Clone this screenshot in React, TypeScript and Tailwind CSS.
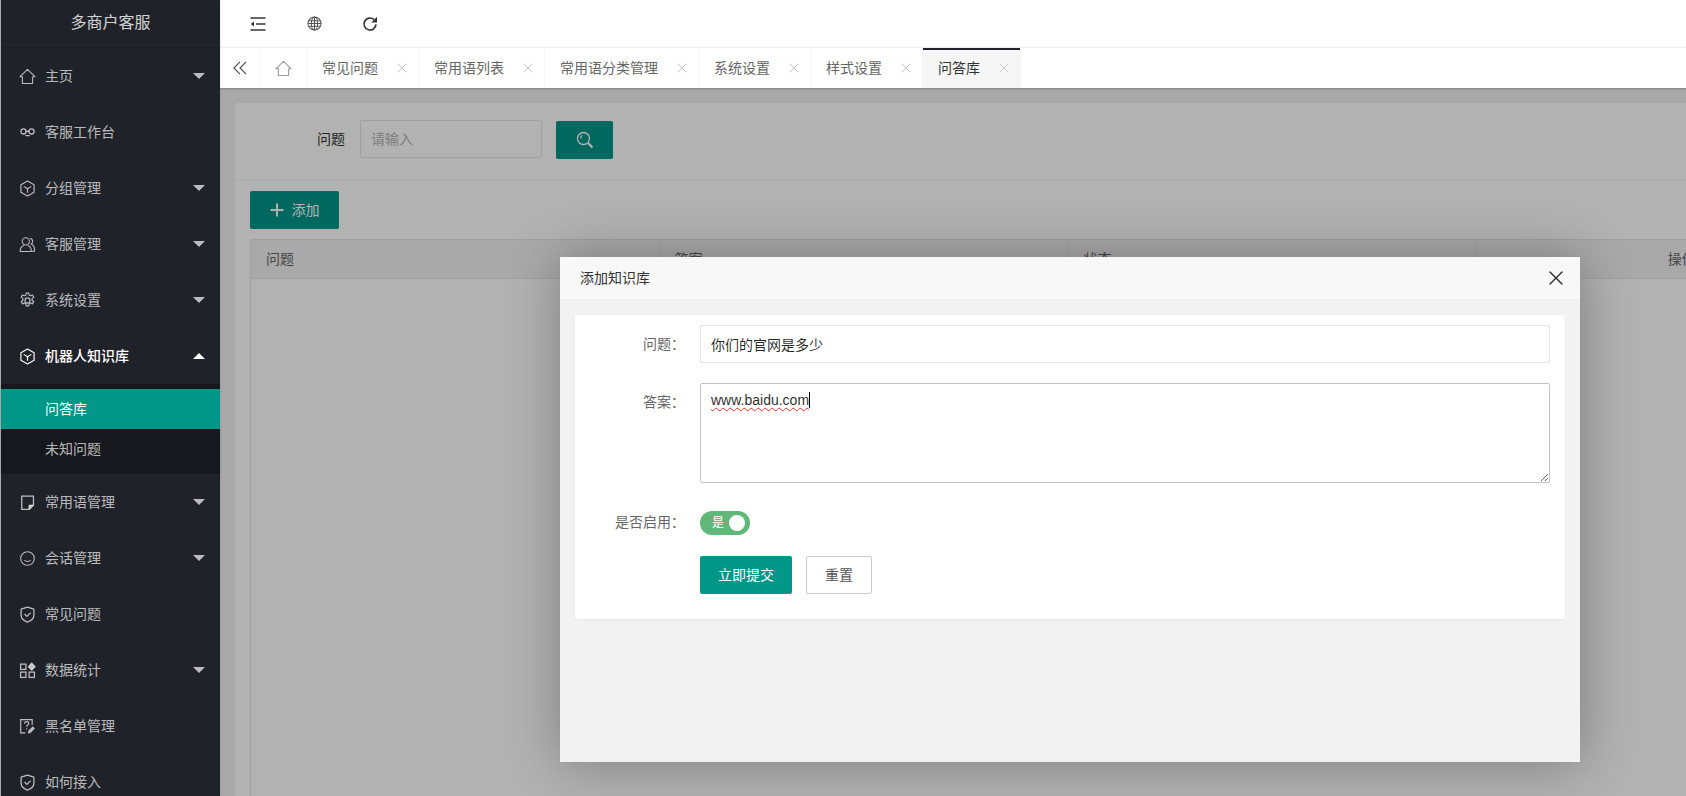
import React from 'react';
import { X } from 'lucide-react';

type IconProps = { className?: string };

// Sidebar + toolbar icons, drawn to match the original icon font
const HomeIcon: React.FC<IconProps> = ({ className }) => (
  <svg viewBox="0 0 16 16" fill="none" stroke="currentColor" strokeWidth="1" className={className}>
    <path d="M8 1.2 15 8.2H12.8V14.6H3.2V8.2H1Z" strokeLinejoin="round" />
  </svg>
);

const LinkIcon: React.FC<IconProps> = ({ className }) => (
  <svg viewBox="0 0 16 16" fill="none" stroke="currentColor" strokeWidth="1.2" className={className}>
    <circle cx="4.2" cy="7" r="2.4" />
    <circle cx="11.8" cy="7" r="2.4" />
    <path d="M6.6 7h2.8M6 11h4" />
  </svg>
);

const BoxIcon: React.FC<IconProps> = ({ className }) => (
  <svg viewBox="0 0 16 16" fill="none" stroke="currentColor" strokeWidth="1.1" className={className}>
    <path d="M8 1 14.2 4.5V11.5L8 15 1.8 11.5V4.5Z" strokeLinejoin="round" />
    <path d="M4.4 6 8 8.2 11.6 6M8 8.2V12" />
  </svg>
);

const UserIcon: React.FC<IconProps> = ({ className }) => (
  <svg viewBox="0 0 16 16" fill="none" stroke="currentColor" strokeWidth="1" className={className}>
    <circle cx="6.4" cy="5" r="3.4" />
    <path d="M1 14.5c0-3 1.6-5 3.6-5.6M8.2 8.9c2 .6 3.4 2.6 3.4 5.6H1" />
    <path d="M10.4 2.2c1.6.4 2.4 1.6 2.4 2.9 0 1-.5 1.9-1.3 2.4 1.9.8 3.1 3 3.1 5.2v1.6h-2.4" />
  </svg>
);

const GearIcon: React.FC<IconProps> = ({ className }) => (
  <svg viewBox="0 0 16 16" fill="none" stroke="currentColor" strokeWidth="1.1" className={className}>
    <circle cx="8" cy="8" r="2.4" />
    <path
      d="M6.8 1h2.4l.4 2 1.2.6 1.9-.8 1.2 2-1.6 1.4v1.6l1.6 1.4-1.2 2-1.9-.8-1.2.6-.4 2H6.8l-.4-2-1.2-.6-1.9.8-1.2-2 1.6-1.4V6.2L2.1 4.8l1.2-2 1.9.8 1.2-.6Z"
      strokeLinejoin="round"
    />
  </svg>
);

const NoteIcon: React.FC<IconProps> = ({ className }) => (
  <svg viewBox="0 0 16 16" fill="none" stroke="currentColor" strokeWidth="1.2" className={className}>
    <path d="M4.6 14.4H2.6V2h11v8.6L9.8 14.4H4.6Z" />
    <path d="M9.6 14V10.6H13.4" fill="currentColor" />
  </svg>
);

const SmileIcon: React.FC<IconProps> = ({ className }) => (
  <svg viewBox="0 0 16 16" fill="none" stroke="currentColor" strokeWidth="1" className={className}>
    <circle cx="8" cy="8" r="6.4" />
    <path d="M5 9.8c1.6 1.2 4.4 1.2 6 0" />
  </svg>
);

const ShieldIcon: React.FC<IconProps> = ({ className }) => (
  <svg viewBox="0 0 16 16" fill="none" stroke="currentColor" strokeWidth="1.2" className={className}>
    <path d="M8 1 14 3V8.6C14 12 11 14 8 15.2 5 14 2 12 2 8.6V3Z" strokeLinejoin="round" />
    <path d="M5.2 7.6 7.4 9.8 11 6.2" />
  </svg>
);

const AppsIcon: React.FC<IconProps> = ({ className }) => (
  <svg viewBox="0 0 16 16" fill="none" stroke="currentColor" strokeWidth="1.2" className={className}>
    <rect x="1.5" y="2" width="5" height="5" />
    <rect x="1.5" y="9.5" width="5" height="5" />
    <rect x="9.5" y="9.5" width="5" height="5" />
    <path d="M12 1.2 15 4.4 12 7.6 9 4.4Z" fill="currentColor" />
  </svg>
);

const HelpDocIcon: React.FC<IconProps> = ({ className }) => (
  <svg viewBox="0 0 16 16" fill="none" stroke="currentColor" strokeWidth="1.1" className={className}>
    <path d="M6 14H1.6V1.6H12.4V6.5" />
    <path d="M5.2 5.4c0-1.4 1-2 2-2s2 .6 2 1.8c0 1.4-2 1.5-2 3M7.2 9.6v1.3" />
    <path d="M8.4 14.6 8.8 12 13 7.8l2 2L10.8 14Z" fill="currentColor" stroke="none" />
  </svg>
);

const GlobeIcon: React.FC<IconProps> = ({ className }) => (
  <svg viewBox="0 0 16 16" fill="none" stroke="currentColor" strokeWidth="1.1" className={className}>
    <circle cx="8" cy="8" r="7" />
    <ellipse cx="8" cy="8" rx="3.4" ry="7" />
    <path d="M8 1V15M1.6 5H14.4M1 8H15M1.6 11H14.4" />
  </svg>
);

const RefreshIcon: React.FC<IconProps> = ({ className }) => (
  <svg viewBox="0 0 16 16" fill="none" stroke="currentColor" strokeWidth="1.7" className={className}>
    <path d="M14 8.4a6 6 0 1 1-1.9-4.8" />
    <path d="M15 0.8V6.4H9.4Z" fill="currentColor" stroke="none" />
  </svg>
);

const Caret: React.FC<{ up?: boolean }> = ({ up }) => (
  <svg viewBox="0 0 12 6" className="w-3 h-[6px] ml-auto mr-[15px] shrink-0" fill="currentColor">
    <path d={up ? 'M6 0 12 6H0Z' : 'M0 0H12L6 6Z'} />
  </svg>
);

const navItems: { label: string; icon: React.FC<IconProps>; caret?: boolean; open?: boolean }[] = [
  { label: '主页', icon: HomeIcon, caret: true },
  { label: '客服工作台', icon: LinkIcon },
  { label: '分组管理', icon: BoxIcon, caret: true },
  { label: '客服管理', icon: UserIcon, caret: true },
  { label: '系统设置', icon: GearIcon, caret: true },
  { label: '机器人知识库', icon: BoxIcon, caret: true, open: true },
  { label: '常用语管理', icon: NoteIcon, caret: true },
  { label: '会话管理', icon: SmileIcon, caret: true },
  { label: '常见问题', icon: ShieldIcon },
  { label: '数据统计', icon: AppsIcon, caret: true },
  { label: '黑名单管理', icon: HelpDocIcon },
  { label: '如何接入', icon: ShieldIcon },
];

const tabs = ['常见问题', '常用语列表', '常用语分类管理', '系统设置', '样式设置', '问答库'];

const Sidebar: React.FC = () => (
  <aside className="relative z-20 w-[220px] shrink-0 h-full overflow-hidden bg-[#20222a] border-l border-[#a8a8a8] shadow-[1px_0_2px_rgba(0,0,0,0.08)]">
    {/* Logo */}
    <div className="h-[48px] flex items-center justify-center border-b border-[#1c1e25] text-base text-white/80 pb-[2px]">
      多商户客服
    </div>

    {/* Navigation */}
    <nav>
      {navItems.map((item) => {
        const Icon = item.icon;
        return (
          <div key={item.label}>
            <div
              className={`h-[56px] flex items-center text-sm ${
                item.open ? 'text-white font-medium' : 'text-white/70'
              }`}
            >
              <Icon className="w-[17px] h-[17px] ml-[18px] mr-[9px] shrink-0" />
              <span>{item.label}</span>
              {item.caret && <Caret up={item.open} />}
            </div>
            {item.open && (
              <div className="bg-[#17181d] py-[5px] text-sm">
                <div className="h-[40px] flex items-center pl-[44px] bg-[#009688] text-white">问答库</div>
                <div className="h-[40px] flex items-center pl-[44px] text-white/70">未知问题</div>
              </div>
            )}
          </div>
        );
      })}
    </nav>
  </aside>
);

const TopBar: React.FC = () => (
  <header className="h-[47px] shrink-0 flex items-center bg-white text-[#333]">
    <div className="w-[76px] flex justify-center">
      <svg viewBox="0 0 16 14" fill="none" stroke="currentColor" strokeWidth="1.5" className="w-4 h-[14px]">
        <path d="M0.5 1H15.5M0.5 13H15.5M6 7H15.5" />
        <path d="M4 4.5V9.5L0.8 7Z" fill="currentColor" stroke="none" />
      </svg>
    </div>
    <div className="w-[36px] flex justify-center">
      <GlobeIcon className="w-[15px] h-[15px] text-[#555]" />
    </div>
    <div className="w-[76px] flex justify-center">
      <RefreshIcon className="w-4 h-4" />
    </div>
  </header>
);

const TabBar: React.FC = () => (
  <div className="relative z-10 h-[41px] shrink-0 flex bg-white border-t border-[#f0f0f0] shadow-[0_1px_2px_rgba(0,0,0,0.25)] text-sm text-[#666]">
    <div className="w-[40px] flex items-center justify-center border-r border-[#f6f6f6] text-[#555]">
      <svg viewBox="0 0 18 16" fill="none" stroke="currentColor" strokeWidth="1.4" className="w-[16px] h-[14px]">
        <path d="M9 1 2 8l7 7M16 1 9 8l7 7" />
      </svg>
    </div>
    <div className="w-[47px] flex items-center justify-center border-r border-[#f6f6f6] text-[#999]">
      <HomeIcon className="w-[17px] h-[17px]" />
    </div>
    {tabs.map((tab) => {
      const active = tab === '问答库';
      return (
        <div
          key={tab}
          className={`relative flex items-center pl-[15px] pr-[40px] border-r border-[#f6f6f6] ${
            active ? 'bg-[#f6f6f6] text-[#333]' : ''
          }`}
        >
          {active && <div className="absolute top-0 left-0 right-0 h-[2px] bg-[#20222a]" />}
          {tab}
          <X className="absolute right-[8px] top-[12px] w-[16px] h-[16px] text-[#c8c8c8]" strokeWidth={1.5} />
        </div>
      );
    })}
  </div>
);

const QaPage: React.FC = () => (
  <div className="ml-[15px] mt-[15px] w-[1666px] min-h-[700px] bg-white rounded-[2px] text-sm text-[#666]">
    {/* Search */}
    <div className="h-[78px] pt-[17px] flex items-start border-b border-[#f6f6f6]">
      <label className="w-[110px] h-[38px] flex items-center pl-[82px] text-[#333]">问题</label>
      <input
        readOnly
        placeholder="请输入"
        className="ml-[15px] w-[182px] h-[38px] px-[10px] border border-[#e6e6e6] rounded-[2px] bg-white placeholder:text-[#b5b5b5] outline-none"
      />
      <button className="ml-[14px] mt-[1px] w-[57px] h-[38px] bg-[#009688] rounded-[2px] flex items-center justify-center text-white">
        <svg viewBox="0 0 18 18" fill="none" stroke="currentColor" strokeWidth="1.3" className="w-[18px] h-[18px]">
          <circle cx="7.5" cy="7.5" r="6" />
          <path d="M4.6 7.5c0-1.5.7-2.6 1.8-3" />
          <path d="M12 12l4.5 4.5" strokeWidth="2.2" />
        </svg>
      </button>
    </div>

    <div className="px-[15px] pt-[10px]">
      <button className="w-[89px] h-[38px] bg-[#009688] rounded-[2px] flex items-center justify-center text-white mb-[10px]">
        <svg viewBox="0 0 14 14" fill="none" stroke="currentColor" strokeWidth="2" className="w-[14px] h-[14px] mr-[8px]">
          <path d="M7 0.5V13.5M0.5 7H13.5" />
        </svg>
        添加
      </button>

      {/* Table */}
      <div className="w-[1636px] min-h-[560px] border-l border-[#e6e6e6]">
        <div className="grid grid-cols-4 h-[40px] bg-[#f2f2f2] border-y border-[#e6e6e6]">
          {['问题', '答案', '状态'].map((col) => (
            <div key={col} className="flex items-center pl-[15px] border-r border-[#e6e6e6]">
              {col}
            </div>
          ))}
          <div className="flex items-center justify-center">操作</div>
        </div>
      </div>
    </div>
  </div>
);

const AddDialog: React.FC = () => (
  <div className="absolute left-[340px] top-[169px] w-[1020px] h-[505px] bg-[#f2f2f2] shadow-[1px_1px_50px_rgba(0,0,0,0.3)] text-sm">
    <div className="h-[43px] flex items-center justify-between pl-[20px] pr-[12px] bg-[#f8f8f8] border-b border-[#eeeeee] text-[#333]">
      添加知识库
      <X className="w-[24px] h-[24px] text-[#333]" strokeWidth={1.5} />
    </div>

    <div className="mx-[15px] mt-[15px] pt-[10px] pb-[25px] pr-[15px] bg-white rounded-[2px] shadow-[0_1px_2px_rgba(0,0,0,0.05)]">
      <div className="flex mb-[20px]">
        <label className="w-[125px] h-[38px] pr-[15px] flex items-center justify-end text-[#666]">问题：</label>
        <input
          readOnly
          value="你们的官网是多少"
          className="flex-1 h-[38px] px-[10px] border border-[#e6e6e6] rounded-[2px] text-black/85 outline-none"
        />
      </div>

      <div className="flex mb-[20px]">
        <label className="w-[125px] h-[38px] pr-[15px] flex items-center justify-end text-[#666]">答案：</label>
        <div className="flex-1 h-[100px] resize overflow-auto border border-[#c4c4c4] rounded-[2px] px-[10px] py-[6px] leading-[20px] text-black/85">
          <span className="underline decoration-wavy decoration-[#e0302c] decoration-1 underline-offset-2">
            www.baidu.com
          </span>
          <span className="inline-block w-px h-[16px] bg-black align-[-3px]" />
        </div>
      </div>

      <div className="flex mb-[15px]">
        <label className="w-[125px] h-[38px] pr-[15px] flex items-center justify-end text-[#666]">是否启用：</label>
        <div className="mt-[8px] w-[50px] h-[24px] rounded-full bg-[#5fb878] flex items-center pl-[12px] text-xs text-white">
          是
          <span className="ml-auto mr-[5px] w-[16px] h-[16px] rounded-full bg-white" />
        </div>
      </div>

      <div className="flex pl-[125px] gap-[14px]">
        <button className="w-[92px] h-[38px] bg-[#009688] rounded-[2px] text-white">立即提交</button>
        <button className="w-[66px] h-[38px] bg-white border border-[#c9c9c9] rounded-[2px] text-[#555]">重置</button>
      </div>
    </div>
  </div>
);

export default function App() {
  return (
    <div className="h-screen w-full flex overflow-hidden [font-family:'Liberation_Sans','Noto_Sans_CJK_SC',sans-serif]">
      <Sidebar />
      <div className="flex-1 min-w-0 flex flex-col">
        <TopBar />
        <TabBar />
        <main className="relative flex-1 min-h-0 overflow-hidden bg-[#f2f2f2]">
          <QaPage />
          <div className="absolute inset-0 bg-black/30" />
          <AddDialog />
        </main>
      </div>
    </div>
  );
}
